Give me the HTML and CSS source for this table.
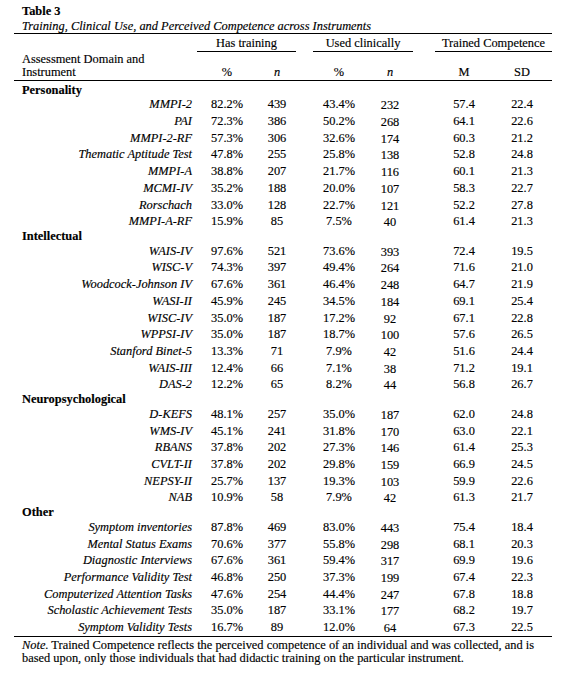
FILE: index.html
```html
<!DOCTYPE html>
<html lang="en">
<head>
<meta charset="utf-8">
<title>Table 3</title>
<link rel="stylesheet" href="styles.css">
</head>
<body>
<div class="page">
  <div class="title">Table 3</div>
  <div class="subtitle">Training, Clinical Use, and Perceived Competence across Instruments</div>

  <div class="table">
    <div class="row group-head">
      <div class="gh gh-train">Has training</div>
      <div class="gh gh-clin">Used clinically</div>
      <div class="gh gh-comp">Trained Competence</div>
    </div>
    <div class="row col-head">
      <div class="head-name">Assessment Domain and<br>Instrument</div>
      <div class="num">%</div>
      <div class="num"><i>n</i></div>
      <div class="num">%</div>
      <div class="num"><i>n</i></div>
      <div class="num m">M</div>
      <div class="num">SD</div>
    </div>

    <div class="body">
      <div class="row cat"><div class="cat-name">Personality</div></div>
      <div class="row item"><div class="name">MMPI-2</div><div class="num">82.2%</div><div class="num">439</div><div class="num">43.4%</div><div class="num n2">232</div><div class="num m">57.4</div><div class="num">22.4</div></div>
      <div class="row item"><div class="name">PAI</div><div class="num">72.3%</div><div class="num">386</div><div class="num">50.2%</div><div class="num n2">268</div><div class="num m">64.1</div><div class="num">22.6</div></div>
      <div class="row item"><div class="name">MMPI-2-RF</div><div class="num">57.3%</div><div class="num">306</div><div class="num">32.6%</div><div class="num n2">174</div><div class="num m">60.3</div><div class="num">21.2</div></div>
      <div class="row item"><div class="name">Thematic Aptitude Test</div><div class="num">47.8%</div><div class="num">255</div><div class="num">25.8%</div><div class="num n2">138</div><div class="num m">52.8</div><div class="num">24.8</div></div>
      <div class="row item"><div class="name">MMPI-A</div><div class="num">38.8%</div><div class="num">207</div><div class="num">21.7%</div><div class="num n2">116</div><div class="num m">60.1</div><div class="num">21.3</div></div>
      <div class="row item"><div class="name">MCMI-IV</div><div class="num">35.2%</div><div class="num">188</div><div class="num">20.0%</div><div class="num n2">107</div><div class="num m">58.3</div><div class="num">22.7</div></div>
      <div class="row item"><div class="name">Rorschach</div><div class="num">33.0%</div><div class="num">128</div><div class="num">22.7%</div><div class="num n2">121</div><div class="num m">52.2</div><div class="num">27.8</div></div>
      <div class="row item"><div class="name">MMPI-A-RF</div><div class="num">15.9%</div><div class="num">85</div><div class="num">7.5%</div><div class="num n2">40</div><div class="num m">61.4</div><div class="num">21.3</div></div>

      <div class="row cat"><div class="cat-name">Intellectual</div></div>
      <div class="row item"><div class="name">WAIS-IV</div><div class="num">97.6%</div><div class="num">521</div><div class="num">73.6%</div><div class="num n2">393</div><div class="num m">72.4</div><div class="num">19.5</div></div>
      <div class="row item"><div class="name">WISC-V</div><div class="num">74.3%</div><div class="num">397</div><div class="num">49.4%</div><div class="num n2">264</div><div class="num m">71.6</div><div class="num">21.0</div></div>
      <div class="row item"><div class="name">Woodcock-Johnson IV</div><div class="num">67.6%</div><div class="num">361</div><div class="num">46.4%</div><div class="num n2">248</div><div class="num m">64.7</div><div class="num">21.9</div></div>
      <div class="row item"><div class="name">WASI-II</div><div class="num">45.9%</div><div class="num">245</div><div class="num">34.5%</div><div class="num n2">184</div><div class="num m">69.1</div><div class="num">25.4</div></div>
      <div class="row item"><div class="name">WISC-IV</div><div class="num">35.0%</div><div class="num">187</div><div class="num">17.2%</div><div class="num n2">92</div><div class="num m">67.1</div><div class="num">22.8</div></div>
      <div class="row item"><div class="name">WPPSI-IV</div><div class="num">35.0%</div><div class="num">187</div><div class="num">18.7%</div><div class="num n2">100</div><div class="num m">57.6</div><div class="num">26.5</div></div>
      <div class="row item"><div class="name">Stanford Binet-5</div><div class="num">13.3%</div><div class="num">71</div><div class="num">7.9%</div><div class="num n2">42</div><div class="num m">51.6</div><div class="num">24.4</div></div>
      <div class="row item"><div class="name">WAIS-III</div><div class="num">12.4%</div><div class="num">66</div><div class="num">7.1%</div><div class="num n2">38</div><div class="num m">71.2</div><div class="num">19.1</div></div>
      <div class="row item"><div class="name">DAS-2</div><div class="num">12.2%</div><div class="num">65</div><div class="num">8.2%</div><div class="num n2">44</div><div class="num m">56.8</div><div class="num">26.7</div></div>

      <div class="row cat"><div class="cat-name">Neuropsychological</div></div>
      <div class="row item"><div class="name">D-KEFS</div><div class="num">48.1%</div><div class="num">257</div><div class="num">35.0%</div><div class="num n2">187</div><div class="num m">62.0</div><div class="num">24.8</div></div>
      <div class="row item"><div class="name">WMS-IV</div><div class="num">45.1%</div><div class="num">241</div><div class="num">31.8%</div><div class="num n2">170</div><div class="num m">63.0</div><div class="num">22.1</div></div>
      <div class="row item"><div class="name">RBANS</div><div class="num">37.8%</div><div class="num">202</div><div class="num">27.3%</div><div class="num n2">146</div><div class="num m">61.4</div><div class="num">25.3</div></div>
      <div class="row item"><div class="name">CVLT-II</div><div class="num">37.8%</div><div class="num">202</div><div class="num">29.8%</div><div class="num n2">159</div><div class="num m">66.9</div><div class="num">24.5</div></div>
      <div class="row item"><div class="name">NEPSY-II</div><div class="num">25.7%</div><div class="num">137</div><div class="num">19.3%</div><div class="num n2">103</div><div class="num m">59.9</div><div class="num">22.6</div></div>
      <div class="row item"><div class="name">NAB</div><div class="num">10.9%</div><div class="num">58</div><div class="num">7.9%</div><div class="num n2">42</div><div class="num m">61.3</div><div class="num">21.7</div></div>

      <div class="row cat"><div class="cat-name">Other</div></div>
      <div class="row item"><div class="name">Symptom inventories</div><div class="num">87.8%</div><div class="num">469</div><div class="num">83.0%</div><div class="num n2">443</div><div class="num m">75.4</div><div class="num">18.4</div></div>
      <div class="row item"><div class="name">Mental Status Exams</div><div class="num">70.6%</div><div class="num">377</div><div class="num">55.8%</div><div class="num n2">298</div><div class="num m">68.1</div><div class="num">20.3</div></div>
      <div class="row item"><div class="name">Diagnostic Interviews</div><div class="num">67.6%</div><div class="num">361</div><div class="num">59.4%</div><div class="num n2">317</div><div class="num m">69.9</div><div class="num">19.6</div></div>
      <div class="row item"><div class="name">Performance Validity Test</div><div class="num">46.8%</div><div class="num">250</div><div class="num">37.3%</div><div class="num n2">199</div><div class="num m">67.4</div><div class="num">22.3</div></div>
      <div class="row item"><div class="name">Computerized Attention Tasks</div><div class="num">47.6%</div><div class="num">254</div><div class="num">44.4%</div><div class="num n2">247</div><div class="num m">67.8</div><div class="num">18.8</div></div>
      <div class="row item"><div class="name">Scholastic Achievement Tests</div><div class="num">35.0%</div><div class="num">187</div><div class="num">33.1%</div><div class="num n2">177</div><div class="num m">68.2</div><div class="num">19.7</div></div>
      <div class="row item"><div class="name">Symptom Validity Tests</div><div class="num">16.7%</div><div class="num">89</div><div class="num">12.0%</div><div class="num n2">64</div><div class="num m">67.3</div><div class="num">22.5</div></div>
    </div>
  </div>

  <div class="note"><i>Note.</i> Trained Competence reflects the perceived competence of an individual and was collected, and is<br>based upon, only those individuals that had didactic training on the particular instrument.</div>
</div>
</body>
</html>
```

FILE: styles.css
```css
html, body {
  margin: 0;
  padding: 0;
  background: #fff;
}

body {
  font-family: "Liberation Serif", "Times New Roman", serif;
  font-size: 12.4px;
  color: #000;
  -webkit-text-stroke: 0.15px #000;
}

.page {
  width: 538px;
  padding: 3px 0 0 14px;
}

.title {
  font-weight: bold;
  line-height: 16px;
  padding-left: 8px;
}

.subtitle {
  font-style: italic;
  line-height: 14px;
  padding-left: 8px;
  border-bottom: 1px solid #000;
}

.row {
  display: grid;
  grid-template-columns: 186px 54px 46px 78px 24px 34px 56px 60px;
}

.group-head {
  padding-top: 2px;
}

.gh {
  text-align: center;
  line-height: 15px;
  border-bottom: 1px solid #000;
}

.gh-train {
  grid-column: 2 / 4;
  margin-right: 4px;
  margin-left: -3px;
}

.gh-clin {
  grid-column: 4 / 7;
  margin-left: 13px;
  margin-right: 23px;
}

.gh-comp {
  grid-column: 7 / 9;
  margin-left: -1px;
}

.col-head {
  height: 27px;
  padding-top: 0.5px;
  padding-bottom: 0.5px;
  line-height: 13.5px;
  border-bottom: 1px solid #000;
  align-items: end;
}

.head-name {
  padding-left: 8px;
  white-space: nowrap;
}

.body {
  padding-top: 2.5px;
  border-bottom: 1px solid #000;
}

.cat {
  height: 12.9px;
  line-height: 12.9px;
}

.cat-name {
  grid-column: 1 / 4;
  padding-left: 8px;
  font-weight: bold;
}

.item {
  height: 16.7px;
  line-height: 16.7px;
}

.name {
  font-style: italic;
  text-align: right;
  padding-right: 8px;
  white-space: nowrap;
}

.num {
  text-align: center;
  white-space: nowrap;
}

.n2 {
  padding-top: 1px;
}

.m {
  grid-column-start: 7;
}

.note {
  padding-top: 2px;
  padding-left: 8px;
  line-height: 13.5px;
  white-space: nowrap;
}
```
